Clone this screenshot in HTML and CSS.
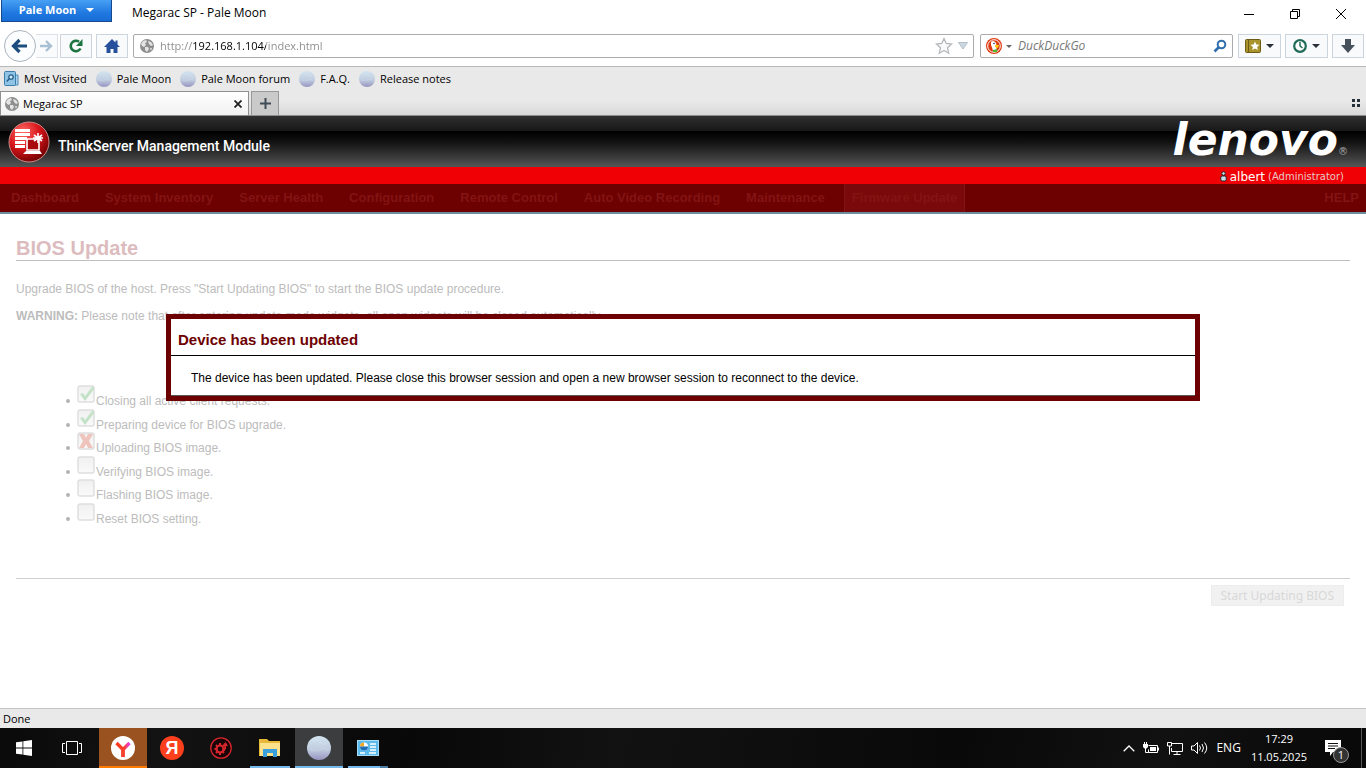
FILE: index.html
```html
<!DOCTYPE html>
<html lang="en">
  <head>
    <meta charset="UTF-8" />
    <title>Megarac SP - Pale Moon</title>
    <link rel="stylesheet" href="styles.css">
  </head>
  <body>

    <!-- shared icons -->
    <svg class="defs" width="0" height="0">
      <defs>
        <linearGradient id="moonFill" x1="0" y1="0" x2="0" y2="1">
          <stop offset="0" stop-color="#d3e4ef" />
          <stop offset="0.55" stop-color="#c0cde0" />
          <stop offset="1" stop-color="#9794c0" />
        </linearGradient>
        <radialGradient id="ballFill" cx="0.35" cy="0.25" r="0.8">
          <stop offset="0" stop-color="#ff6a64" />
          <stop offset="0.5" stop-color="#d8161c" />
          <stop offset="1" stop-color="#6e0000" />
        </radialGradient>
        <linearGradient id="boxFill" x1="0" y1="0" x2="0" y2="1">
          <stop offset="0" stop-color="#f0f0f0" />
          <stop offset="1" stop-color="#fafafa" />
        </linearGradient>
        <linearGradient id="yFill" x1="0" y1="0" x2="1" y2="0">
          <stop offset="0" stop-color="#ff3a20" />
          <stop offset="0.6" stop-color="#f8402c" />
          <stop offset="1" stop-color="#e83ce8" />
        </linearGradient>
        <symbol id="moon" viewBox="0 0 16 16">
          <circle cx="8" cy="8" r="8" fill="url(#moonFill)" />
          <path d="M3 4q3-2 5 0t5 1M2 9q4 2 7 0t5 1" fill="none" stroke="#e2edf5" stroke-opacity=".2" />
        </symbol>
        <symbol id="globe" viewBox="0 0 16 16">
          <circle cx="8" cy="8" r="7" fill="#8e8e8e" />
          <path d="M2 6l2-3 3-1 1 2-2 1 1 2-2 2-2-1zM9 3l3 1 2 3-2 1-2-2zM6 9l3 0 1 2-2 3-2-2zM11 10l2 0-1 3z" fill="#e4e4e4" />
        </symbol>
        <symbol id="box" viewBox="0 0 18 18">
          <rect x="1" y="1" width="16" height="16" rx="2" fill="url(#boxFill)" stroke="#dedede" stroke-width="1.4" />
        </symbol>
      </defs>
    </svg>

    <header class="titlebar">
      <button class="app-menu">Pale Moon
        <svg width="8" height="4" viewBox="0 0 8 4"><path d="M0 0h8L4 4z" fill="#fff" /></svg>
      </button>
      <span class="window-title">Megarac SP - Pale Moon</span>
      <div class="window-controls">
        <button aria-label="Minimize"><svg width="12" height="12" viewBox="0 0 12 12"><path d="M1 6.5h10" /></svg></button>
        <button aria-label="Restore"><svg width="12" height="12" viewBox="0 0 12 12"><path d="M1.500 3.500h7v7h-7zM3.500 3.500v-2h7v7h-2" /></svg></button>
        <button aria-label="Close"><svg width="12" height="12" viewBox="0 0 12 12"><path d="M1 1l10 10M11 1L1 11" /></svg></button>
      </div>
    </header>

    <div class="toolbar">
      <div class="history">
        <button class="back" aria-label="Back">
          <svg width="18" height="16" viewBox="0 0 18 16"><path d="M2 8h14M8.500 2L2.500 8l6 6" fill="none" stroke="#1d4c7e" stroke-width="3.200" /></svg>
        </button>
        <button class="forward" aria-label="Forward">
          <svg width="13" height="12" viewBox="0 0 13 12"><path d="M0 6h11M6 1l5 5-5 5" fill="none" stroke="#a9bfd4" stroke-width="2.400" /></svg>
        </button>
      </div>
      <button class="tool" aria-label="Reload">
        <svg width="16" height="16" viewBox="0 0 16 16"><path d="M12.500 10.500A5.200 5.200 0 1 1 11 3.800" fill="none" stroke="#1c7440" stroke-width="2.600" /><path d="M14.500 1v7H8z" fill="#1c7440" /></svg>
      </button>
      <button class="tool" aria-label="Home">
        <svg width="16" height="16" viewBox="0 0 16 16"><path d="M8 1L0 9h2.500v6H6.500v-4h3v4h4V9H16l-2.500-2.500V2.500h-2v2z" fill="#27509c" /></svg>
      </button>
      <div class="field address">
        <svg width="16" height="16"><use href="#globe" /></svg>
        <input class="url" type="text" aria-label="Address" value="http://192.168.1.104/index.html" />
        <svg width="18" height="18" viewBox="0 0 18 18"><path d="M9 1.500l2.200 5 5.300.6-4 3.600 1.200 5.500L9 13.400l-4.700 2.800 1.200-5.500-4-3.600 5.300-.6z" fill="#fafafa" stroke="#b5b9bd" stroke-width="1.300" /></svg>
        <svg width="10" height="8" viewBox="0 0 10 8"><path d="M.500.500h9L5 7z" fill="#cbd8e2" stroke="#b4bfc8" /></svg>
      </div>
      <div class="field search">
        <svg width="16" height="16" viewBox="0 0 16 16">
          <circle cx="8" cy="8" r="8" fill="#de3a10" />
          <circle cx="8" cy="8" r="6.300" fill="none" stroke="#fff" stroke-width="1" />
          <path d="M5 4q2-2 4 0 2 1 1 4l1 5H7Q6 9 5 7z" fill="#fff" />
          <path d="M9 7l4 0-1 3-3-1z" fill="#fc1" />
          <path d="M7 12l4-1v3H7z" fill="#4b3" />
          <circle cx="8" cy="5.500" r=".8" fill="#235" />
        </svg>
        <svg width="6" height="3" viewBox="0 0 6 3"><path d="M0 0h6L3 3z" fill="#666" /></svg>
        <input class="query" type="text" aria-label="Search" placeholder="DuckDuckGo" />
        <svg width="14" height="14" viewBox="0 0 14 14"><circle cx="8.500" cy="5.500" r="3.800" fill="none" stroke="#2f6fae" stroke-width="2" /><path d="M6 8L1.500 12.500" stroke="#2f6fae" stroke-width="2.600" /></svg>
      </div>
      <button class="tool wide" aria-label="Bookmarks">
        <svg width="16" height="14" viewBox="0 0 16 14"><rect x=".5" y=".5" width="15" height="13" rx="1" fill="#a8932c" stroke="#6d5d14" /><path d="M3.500 1v12" stroke="#6d5d14" /><path d="M10 2.500l1.300 3 3.200.3-2.400 2.100.7 3.200L10 9.400l-2.800 1.700.7-3.200-2.400-2.100 3.200-.3z" fill="#fff" /></svg>
        <svg width="8" height="4" viewBox="0 0 8 4"><path d="M0 0h8L4 4z" fill="#2a3138" /></svg>
      </button>
      <button class="tool wide" aria-label="History">
        <svg width="14" height="14" viewBox="0 0 14 14"><circle cx="7" cy="7" r="5.800" fill="#fff" stroke="#1f6b56" stroke-width="2.200" /><path d="M7 3v4l2.500 2" fill="none" stroke="#1f6b56" stroke-width="1.500" /></svg>
        <svg width="8" height="4" viewBox="0 0 8 4"><path d="M0 0h8L4 4z" fill="#2a3138" /></svg>
      </button>
      <button class="tool" aria-label="Downloads">
        <svg width="14" height="14" viewBox="0 0 14 14"><path d="M4 0h6v6h4l-7 8-7-8h4z" fill="#47515c" /></svg>
      </button>
    </div>

    <nav class="bookmarks">
      <a href="#">
        <svg width="15" height="16" viewBox="0 0 15 16"><path d="M11 4h3v10h-4z" fill="#a9d2ee" stroke="#4d8db8" /><rect x=".5" y=".5" width="11" height="14" rx="1" fill="#8fc4e6" stroke="#3c7ca8" /><circle cx="7" cy="6" r="2.200" fill="#d7ecf8" stroke="#255f8c" stroke-width="1.300" /><path d="M5.500 7.500L2.800 10.500" stroke="#255f8c" stroke-width="1.500" /></svg>
        Most Visited
      </a>
      <a href="#"><svg width="16" height="16"><use href="#moon" /></svg>Pale Moon</a>
      <a href="#"><svg width="16" height="16"><use href="#moon" /></svg>Pale Moon forum</a>
      <a href="#"><svg width="16" height="16"><use href="#moon" /></svg>F.A.Q.</a>
      <a href="#"><svg width="16" height="16"><use href="#moon" /></svg>Release notes</a>
    </nav>

    <div class="tabs">
      <div class="tab">
        <svg width="16" height="16"><use href="#globe" /></svg>
        <span>Megarac SP</span>
        <button aria-label="Close tab"><svg width="8" height="8" viewBox="0 0 8 8"><path d="M.5.5l7 7M7.500.5l-7 7" stroke="#222" stroke-width="1.800" /></svg></button>
      </div>
      <button class="new-tab" aria-label="New tab"><svg width="11" height="11" viewBox="0 0 11 11"><path d="M5.500 0v11M0 5.500h11" stroke="#3f4b56" stroke-width="2" /></svg></button>
      <button class="all-tabs" aria-label="All tabs"><svg width="8" height="8" viewBox="0 0 8 8"><path d="M0 0h3v3H0zM5 0h3v3H5zM0 5h3v3H0zM5 5h3v3H5z" fill="#263038" /></svg></button>
    </div>

    <div class="banner">
      <svg class="ball" width="42" height="42" viewBox="0 0 42 42">
        <circle cx="21" cy="21" r="20" fill="url(#ballFill)" stroke="#c98a88" />
        <path d="M7 8h15v3H7zM7 12h15v3H7zM7 16h12v3H7zM7 20h10v3H7zM7 24h10v3H7z" fill="#fff" />
        <path d="M19 18h12v11H19z" fill="#a80a0e" stroke="#fff" stroke-width="1.600" />
        <path d="M18 30h14l2 3H15z" fill="#fff" />
        <path d="M30 12v10M26 14l8 6M34 14l-8 6M25 17h10" stroke="#fff" stroke-width="1.600" />
      </svg>
      <span class="product">ThinkServer Management Module</span>
      <span class="brand">lenovo<small>®</small></span>
    </div>

    <div class="userbar">
      <svg width="7" height="11" viewBox="0 0 7 11"><circle cx="3.500" cy="2.500" r="1.800" fill="#cde" stroke="#222" /><rect x=".8" y="5" width="5.400" height="5" rx="1.500" fill="#cde" stroke="#222" /></svg>
      <span class="user">albert</span>
      <span class="role">(Administrator)</span>
    </div>

    <nav class="menu">
      <a href="#">Dashboard</a>
      <a href="#">System Inventory</a>
      <a href="#">Server Health</a>
      <a href="#">Configuration</a>
      <a href="#">Remote Control</a>
      <a href="#">Auto Video Recording</a>
      <a href="#">Maintenance</a>
      <a href="#" class="current">Firmware Update</a>
      <a href="#" class="help">HELP</a>
    </nav>

    <main class="page">
      <h1>BIOS Update</h1>
      <p>Upgrade BIOS of the host. Press "Start Updating BIOS" to start the BIOS update procedure.</p>
      <p><b>WARNING:</b> Please note that after entering update mode widgets, all open widgets will be closed automatically.</p>

      <ul class="steps">
        <li><svg width="18" height="18" viewBox="0 0 18 18"><use href="#box" /><path d="M3 9l3-1 2 3 7-9 2 0v2L8 16z" fill="#c4e2c8" /></svg>Closing all active client requests.</li>
        <li><svg width="18" height="18" viewBox="0 0 18 18"><use href="#box" /><path d="M3 9l3-1 2 3 7-9 2 0v2L8 16z" fill="#c4e2c8" /></svg>Preparing device for BIOS upgrade.</li>
        <li><svg width="18" height="18" viewBox="0 0 18 18"><use href="#box" /><path d="M2 2h5l2 4 2-4h5l-4 7 4 7h-5l-2-4-2 4H2l4-7z" fill="#efc4bc" /></svg>Uploading BIOS image.</li>
        <li><svg width="18" height="18"><use href="#box" /></svg>Verifying BIOS image.</li>
        <li><svg width="18" height="18"><use href="#box" /></svg>Flashing BIOS image.</li>
        <li><svg width="18" height="18"><use href="#box" /></svg>Reset BIOS setting.</li>
      </ul>

      <div class="actions">
        <button disabled>Start Updating BIOS</button>
      </div>

      <div class="dialog" role="alertdialog" aria-labelledby="dialogTitle">
        <h2 id="dialogTitle">Device has been updated</h2>
        <p>The device has been updated. Please close this browser session and open a new browser session to reconnect to the device.</p>
      </div>
    </main>

    <footer class="status">Done</footer>

    <div class="taskbar">
      <button aria-label="Start"><svg width="16" height="16" viewBox="0 0 16 16"><path d="M0 2.300l6.500-.9v6.200H0zM7.300 1.200L16 0v7.600H7.300zM0 8.400h6.500v6.200L0 13.700zM7.300 8.400H16V16l-8.700-1.200z" fill="#fff" /></svg></button>
      <button aria-label="Task View"><svg width="20" height="14" viewBox="0 0 20 14"><path d="M4.500.5h11v13h-11zM3 2.500H.5v9H3M17 2.500h2.500v9H17" fill="none" stroke="#fff" /></svg></button>
      <div class="apps">
        <button class="alert" aria-label="Yandex Browser"><svg width="24" height="24" viewBox="0 0 24 24"><circle cx="12" cy="12" r="12" fill="#fff" /><path d="M5.500 7l6.500 6.500L18.500 7M12 13v8" fill="none" stroke="url(#yFill)" stroke-width="3.400" /><path d="M12 12v9" stroke="#f8402c" stroke-width="3.400" /></svg></button>
        <button class="ya" aria-label="Yandex"><span>Я</span></button>
        <button aria-label="Settings tool"><svg width="22" height="22" viewBox="0 0 22 22"><circle cx="11" cy="11" r="10.200" fill="#1a0506" stroke="#d8262e" stroke-width="1.300" /><circle cx="10" cy="12" r="3.500" fill="none" stroke="#d8262e" stroke-width="2.200" /><path d="M10 6v3M10 15v3M4.500 12h3M6 8l2 2M6 16l2-2M14 16l-2-2" stroke="#d8262e" stroke-width="2" /><path d="M13 14q3-2 2-6" fill="none" stroke="#d8262e" stroke-width="1.800" /><path d="M12 9l3.500-4L18 9z" fill="#d8262e" /></svg></button>
        <button class="open" aria-label="File Explorer"><svg width="22" height="20" viewBox="0 0 22 20"><path d="M0 1h8l2 2h11v15H0z" fill="#e8b838" /><path d="M1 5h20v13H1z" fill="#fde18b" /><path d="M4 19v-8h14v8h-4v-4H8v4z" fill="#3aa0dd" /></svg></button>
        <button class="open active" aria-label="Pale Moon"><svg width="24" height="24"><use href="#moon" /></svg></button>
        <button class="open stacked" aria-label="Control Panel"><svg width="22" height="16" viewBox="0 0 22 16"><rect x=".5" y=".5" width="21" height="15" fill="#5cb9ec" stroke="#a6dcf8" /><circle cx="7" cy="6.500" r="4" fill="#fff" /><path d="M7 6.500v-4a4 4 0 0 0-4 4z" fill="#f5a623" /><path d="M7 6.500h4a4 4 0 0 1-8 0z" fill="#1d6fb8" /><path d="M13 4h6M13 7h6M13 10h6M3 13h5M12 13h7" stroke="#fff" stroke-width="1.300" /></svg></button>
      </div>
      <div class="tray">
        <svg width="12" height="7" viewBox="0 0 12 7"><path d="M.7 6.300L6 1l5.300 5.300" fill="none" stroke="#fff" stroke-width="1.300" /></svg>
        <svg width="16" height="12" viewBox="0 0 16 12"><path d="M5.500 3.500h9v7h-9v-3M15.500 5.500v3" fill="none" stroke="#fff" /><path d="M7 5h6v4H7zM0 2h5v3L3.500 6.500h-2L0 5z" fill="#fff" /><path d="M1.500 0v2M3.500 0v2M2.500 6v4.500h3" fill="none" stroke="#fff" /></svg>
        <svg width="16" height="13" viewBox="0 0 16 13"><path d="M5 1.500h10.500v8H4.500V6M10 9.500v3M6.500 12.500h7M.5.500h4v3.500h-4zM2.500 4v8.500" fill="none" stroke="#fff" /></svg>
        <svg width="17" height="14" viewBox="0 0 17 14"><path d="M.5 5v4h2.500l3.500 3.500v-11L3 5zM8.500 4.500q2 2.500 0 5M11 3q3 4 0 8M13.500 1.500q4.500 5.500 0 11" fill="none" stroke="#fff" /></svg>
        <span class="lang">ENG</span>
        <div class="clock"><span>17:29</span><span>11.05.2025</span></div>
        <button class="notices" aria-label="Notifications">
          <svg width="16" height="16" viewBox="0 0 16 16"><path d="M0 0h16v12H8l-3 4v-4H0z" fill="#fff" /><path d="M3 3.500h10M3 6h10M3 8.500h7" stroke="#111" /></svg>
          <span class="badge">1</span>
        </button>
      </div>
    </div>

  </body>
</html>
```
FILE: styles.css
```css
* {
  box-sizing: border-box;
}

body {
  margin: 0;
  min-height: 100vh;
  display: flex;
  flex-direction: column;
  background: #fff;
  color: #000;
  font-family: "Open Sans", "Noto Sans", sans-serif;
  font-size: 12px;
  line-height: 16px;
}

button,
input {
  font: inherit;
  padding: 0;
}

button {
  display: flex;
  align-items: center;
  justify-content: center;
  border: none;
  background: none;
}

a {
  color: inherit;
  text-decoration: none;
}

svg {
  flex: none;
}

.defs {
  position: absolute;
}

/* browser window */
.titlebar {
  display: flex;
  align-items: flex-start;
  height: 28px;
  padding: 0 2px 0 1px;
}

.app-menu {
  width: 111px;
  height: 22px;
  gap: 10px;
  padding-bottom: 2px;
  border: 1px solid #174a8c;
  border-top: none;
  background: linear-gradient(#48a0f4, #2079e0 60%, #186cd6);
  color: #fff;
  font-size: 11px;
  font-weight: 700;
}

.window-title {
  padding: 5px 0 0 20px;
}

.window-controls {
  display: flex;
  margin-left: auto;
}

.window-controls button {
  width: 46px;
  height: 28px;
}

.window-controls path {
  fill: none;
  stroke: #000;
}

.toolbar {
  display: flex;
  align-items: center;
  height: 38px;
  gap: 4px;
  padding: 0 2px 2px 4px;
}

.history {
  display: flex;
  align-items: center;
  margin-right: -2px;
}

.back {
  width: 32px;
  height: 32px;
  border: 1px solid #a9b4be;
  border-radius: 50%;
  background: #fcfdfe;
}

.forward {
  width: 22px;
  height: 24px;
  border: 1px solid #dbe1e6;
  border-left: none;
  background: #fafbfc;
}

.tool {
  width: 32px;
  height: 24px;
  gap: 5px;
  border: 1px solid #ccd5de;
  background: #f9fafb;
}

.tool.wide {
  width: 43px;
}

.field {
  display: flex;
  align-items: center;
  height: 24px;
  gap: 5px;
  padding: 0 5px;
  border: 1px solid #ababab;
  border-radius: 2px;
  background: #fff;
}

.field input {
  flex: 1;
  min-width: 0;
  border: none;
  outline: none;
}

.address {
  flex: 1;
  margin: 0 2px 0 1px;
  font-size: 11px;
}

/* the host part of the address is darker than the rest */
.url {
  background: linear-gradient(to right, #8a8a8a 32px, #000 32px, #000 106px, #8a8a8a 106px);
  background-clip: text;
  -webkit-background-clip: text;
  color: transparent;
  caret-color: #000;
}

.search {
  width: 253px;
  margin-right: 1px;
  gap: 4px;
}

.query {
  padding-left: 2px;
  font-style: italic;
}

.query::placeholder {
  color: #777;
}

.bookmarks {
  display: flex;
  align-items: center;
  height: 25px;
  gap: 9px;
  padding-left: 4px;
  border-top: 1px solid #b8b8b8;
  background: #e9e9e9;
  font-size: 11px;
}

.bookmarks a {
  display: flex;
  align-items: center;
  gap: 5px;
}

.tabs {
  display: flex;
  height: 25px;
  gap: 2px;
  border-bottom: 1px solid #8c8c8c;
  background: linear-gradient(#e9e9e9 40%, #d9d9d9);
}

.tab {
  display: flex;
  align-items: center;
  width: 249px;
  gap: 3px;
  padding: 0 6px 0 3px;
  border: 1px solid #909090;
  border-bottom: none;
  background: linear-gradient(#fff, #f2f2f2);
  font-size: 11px;
}

.tab button {
  margin-left: auto;
}

.new-tab {
  width: 28px;
  border: 1px solid #999;
  border-bottom: none;
  background: #cacaca;
}

.all-tabs {
  margin-left: auto;
  padding-right: 6px;
}

/* management module */
.banner {
  display: flex;
  align-items: center;
  height: 51px;
  padding: 0 18px 0 8px;
  background: linear-gradient(#303030, #181818 29%, #000 30%, #111 50%, #555);
  color: #fff;
}

.product {
  padding: 9px 0 0 8px;
  font-family: Roboto, sans-serif;
  font-size: 14px;
  font-weight: 500;
}

.brand {
  margin-left: auto;
  padding-top: 8px;
  font-family: "DejaVu Sans", sans-serif;
  font-size: 44px;
  font-style: italic;
  font-weight: 700;
  line-height: 48px;
}

.brand small {
  color: #aaa;
  font-size: 10px;
  font-style: normal;
  font-weight: 400;
}

.userbar {
  display: flex;
  align-items: center;
  justify-content: flex-end;
  height: 17px;
  gap: 3px;
  padding: 2px 22px 0 0;
  background: #f00004;
  color: #fff;
  font-family: "DejaVu Sans", sans-serif;
}

.userbar .role {
  color: #e8c8c8;
  font-size: 10px;
}

.menu {
  display: flex;
  height: 30px;
  gap: 12px;
  padding: 0 0 0 4px;
  border-bottom: 2px solid #6c8ca0;
  background: #6d0000;
  color: #821414;
  font-family: "Liberation Sans", Arial, sans-serif;
  font-size: 13px;
  font-weight: 700;
  line-height: 28px;
}

.menu a {
  padding: 0 7px;
}

.menu .current {
  border: 1px solid #821414;
  border-width: 0 1px;
  background: #7a090b;
}

.menu .help {
  margin-left: auto;
}

.page {
  position: relative;
  flex: 1;
  padding: 22px 16px 0;
  color: #bcbcbc;
  font-family: "Liberation Sans", Arial, sans-serif;
}

.page h1 {
  margin: 0 0 20px;
  border-bottom: 1px solid #bfbfbf;
  color: #dcbcbe;
  font-size: 20px;
  line-height: 24px;
}

.page p {
  margin: 0 0 11px;
}

.steps {
  display: grid;
  grid-template-rows: repeat(6, minmax(0, 1fr));
  height: 141px;
  margin: 61px 0 52px;
  padding-left: 64px;
  list-style: none;
}

.steps li {
  display: flex;
  align-items: flex-start;
  gap: 1px;
  line-height: 32px;
}

.steps li::before {
  content: "";
  width: 4px;
  height: 4px;
  margin: 14px 6px 0 -14px;
  border-radius: 50%;
  background: #b4b4b4;
}

.actions {
  display: flex;
  justify-content: flex-end;
  padding: 6px 6px 0 0;
  border-top: 1px solid #cfcfcf;
}

.actions button {
  height: 21px;
  padding: 0 9px;
  border: 1px solid #ededed;
  background: #f1f1f1;
  color: #d8d8d8;
  font-family: "Noto Sans", sans-serif;
}

.dialog {
  position: absolute;
  top: 100px;
  left: 166px;
  right: 166px;
  border: 5px solid #6d0000;
  background: #fff;
  color: #000;
}

.dialog h2 {
  margin: 0;
  padding: 12px 7px 6px;
  border-bottom: 1px solid #000;
  color: #6d0000;
  font-size: 15px;
  line-height: 18px;
}

.dialog p {
  margin: 0;
  padding: 14px 20px 9px;
  border-bottom: 1px solid #555;
}

.status {
  height: 20px;
  padding: 2px 3px;
  border-top: 1px solid #c4c4c4;
  background: #e9e9e9;
  font-size: 11px;
}

/* desktop taskbar */
.taskbar {
  display: flex;
  height: 40px;
  background: linear-gradient(100deg, #0a0a0a, #131313 12%, #080808 30%, #121212 45%, #090909 70%, #111 85%, #080808);
  color: #fff;
}

.taskbar button {
  width: 48px;
}

.apps {
  display: flex;
  gap: 1px;
  margin-left: 3px;
}

.apps .alert {
  background: linear-gradient(#ff7a00, #ff7a00) bottom / 100% 2px no-repeat #9a5320;
}

.apps .open {
  background: linear-gradient(#76b9ed, #76b9ed) bottom / 40px 2px no-repeat;
}

.apps .open.active {
  background-color: #3c3d3e;
  background-size: 100% 2px;
}

.apps .open.stacked {
  background-image: linear-gradient(to right, #76b9ed 32px, #4f7ea4 32px);
}

.ya span {
  width: 24px;
  border-radius: 50%;
  background: #fc3f1d;
  color: #fff;
  font-family: "Liberation Sans", Arial, sans-serif;
  font-size: 18px;
  font-weight: 700;
  line-height: 24px;
}

.tray {
  display: flex;
  align-items: center;
  gap: 8px;
  margin-left: auto;
}

.clock {
  display: flex;
  flex-direction: column;
  align-items: center;
  padding-left: 2px;
  font-size: 11px;
  line-height: 18px;
}

.taskbar .notices {
  position: relative;
  align-self: stretch;
  width: 47px;
  margin-right: 4px;
  padding-right: 10px;
  border-right: 1px solid #555;
}

.badge {
  position: absolute;
  left: 18px;
  top: 19px;
  width: 16px;
  border: 1px solid #999;
  border-radius: 50%;
  background: #333;
  color: #fff;
  font-size: 11px;
  line-height: 14px;
}
```
